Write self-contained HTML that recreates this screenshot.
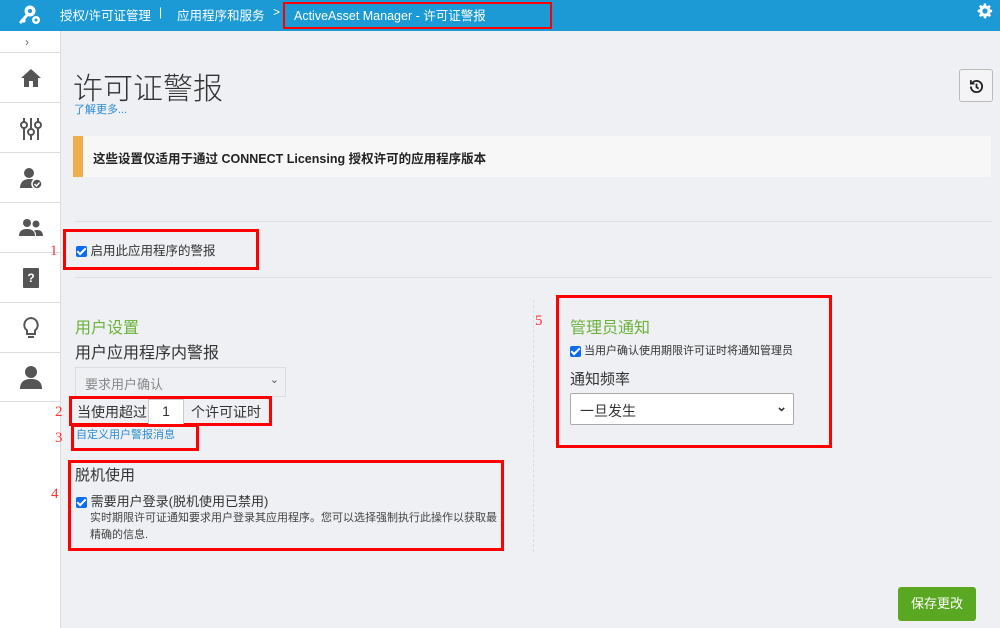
<!DOCTYPE html>
<html><head><meta charset="utf-8"><style>
*{box-sizing:border-box;margin:0;padding:0}
body{width:1000px;height:628px;overflow:hidden;background:#eff0f4;font-family:"Liberation Sans","Noto Sans CJK SC",sans-serif;color:#333;position:relative}
.a{position:absolute}
.top{left:0;top:0;width:1000px;height:31px;background:#1c9ad6;color:#fff;font-size:12px}
.side{left:0;top:31px;width:61px;height:597px;background:#fff;border-right:1px solid #ddd}
.si{position:absolute;left:0;width:61px;border-top:1px solid #ddd;height:50px;display:flex;align-items:center;justify-content:center}
.red{position:absolute;border:3px solid #f00}
.rn{position:absolute;color:#f33;font-family:"Liberation Serif",serif;font-size:15px}
.cb{display:inline-block;width:11px;height:11px;background:#0b6cf0;border-radius:2px;position:relative;vertical-align:middle}
.cb:after{content:"";position:absolute;left:3px;top:0px;width:3px;height:7px;border:solid #fff;border-width:0 2px 2px 0;transform:rotate(45deg)}
</style></head><body>
<div class="a top">
 <svg class="a" style="left:17px;top:5px" width="24" height="20" viewBox="0 0 24 20"><circle cx="13" cy="6" r="5.5" fill="#fff"/><circle cx="13" cy="6" r="2" fill="#1c9ad6"/><path d="M9 9 L2 17 L4 19 L6 17 L7 18 L9 16 L8 15 L11 11Z" fill="#fff"/><circle cx="19" cy="15" r="4" fill="#fff"/><circle cx="19" cy="15" r="1.5" fill="#1c9ad6"/></svg>
 <span class="a" style="left:60px;top:5px;font-size:12.5px">授权/许可证管理</span>
 <span class="a" style="left:159px;top:5px">|</span>
 <span class="a" style="left:177px;top:5px;font-size:12.5px">应用程序和服务</span>
 <span class="a" style="left:273px;top:5px">&gt;</span>
 <div class="red" style="left:283px;top:2px;width:269px;height:27px;border-width:2px"></div>
 <span class="a" style="left:294px;top:5px;font-size:12.5px">ActiveAsset Manager - 许可证警报</span>
 <svg class="a" style="left:976px;top:2px" width="18" height="18" viewBox="0 0 24 24"><path fill="#fff" fill-rule="evenodd" d="M12 8.5a3.5 3.5 0 100 7 3.5 3.5 0 000-7zm9.5 5v-3l-2.6-.5-.7-1.7 1.5-2.2-2.1-2.1-2.2 1.5-1.7-.7L13.5 2h-3l-.5 2.6-1.7.7L6.1 3.8 4 5.9l1.5 2.2-.7 1.7L2.2 10.5v3l2.6.5.7 1.7L4 17.9 6.1 20l2.2-1.5 1.7.7.5 2.6h3l.5-2.6 1.7-.7 2.2 1.5 2.1-2.1-1.5-2.2.7-1.7z"/></svg>
</div>
<div class="a side">
 <div class="a" style="left:25px;top:4px;color:#666;font-size:12px">›</div>
 <div class="si" style="top:21px"><svg width="22" height="20" viewBox="0 0 22 20"><path d="M11 1 L1 10 H4 V19 H9 V13 H13 V19 H18 V10 H21Z" fill="#555"/></svg></div>
 <div class="si" style="top:71px"><svg width="22" height="24" viewBox="0 0 22 24" stroke="#555" stroke-width="2" fill="none"><path d="M4 2V24M11 2V24M18 2V24"/><circle cx="4" cy="9" r="3" fill="#fff"/><circle cx="11" cy="16" r="3" fill="#fff"/><circle cx="18" cy="9" r="3" fill="#fff"/></svg></div>
 <div class="si" style="top:121px"><svg width="24" height="24" viewBox="0 0 24 24" fill="#555"><circle cx="10" cy="7" r="5"/><path d="M1 22c0-6 4-9 9-9s6 1 7 2v7z"/><circle cx="18" cy="18" r="5" fill="#555" stroke="#fff" stroke-width="1.5"/><path d="M15.5 18l2 2 3-3.5" stroke="#fff" stroke-width="1.5" fill="none"/></svg></div>
 <div class="si" style="top:171px"><svg width="24" height="20" viewBox="0 0 24 20" fill="#555"><circle cx="8" cy="5" r="4"/><circle cx="17" cy="6" r="3.5"/><path d="M0 18c0-5 3-7 8-7s8 2 8 7z"/><path d="M17 18h7c0-4-2-6-6-6-1 0-2 0-3 1 2 1 2 3 2 5z"/></svg></div>
 <div class="si" style="top:221px"><svg width="18" height="22" viewBox="0 0 18 22"><rect x="1" y="1" width="16" height="20" rx="1" fill="#555"/><text x="9" y="15" font-size="12" font-weight="bold" fill="#fff" text-anchor="middle" font-family="Liberation Sans">?</text></svg></div>
 <div class="si" style="top:271px"><svg width="18" height="24" viewBox="0 0 18 24" fill="none" stroke="#555" stroke-width="2"><path d="M9 2a7 7 0 00-4 12.5V18h8v-3.5A7 7 0 009 2z"/><path d="M6 21h6"/></svg></div>
 <div class="si" style="top:321px;border-bottom:1px solid #ddd"><svg width="22" height="24" viewBox="0 0 22 24" fill="#555"><circle cx="11" cy="7" r="6"/><path d="M0 24c0-7 4-10 11-10s11 3 11 10z"/></svg></div>
</div>
<div class="a" style="left:73px;top:64px;font-size:30px;color:#333;font-weight:300">许可证警报</div>
<div class="a" style="left:74px;top:101px;font-size:11px;color:#2a8bd6">了解更多...</div>
<div class="a" style="left:959px;top:69px;width:34px;height:33px;border:1px solid #bbb;border-radius:3px;background:#f4f4f6"><svg style="margin:8px" width="17" height="17" viewBox="0 0 24 24" fill="none" stroke="#222" stroke-width="2.5"><path d="M4 12a8 8 0 108-8 8 8 0 00-6 3"/><path d="M4 3v5h5" stroke-width="2.5"/><path d="M12 8v5l3 2"/></svg></div>
<div class="a" style="left:73px;top:136px;width:918px;height:41px;background:#f7f7f8;border-left:10px solid #f0ad4e"></div>
<div class="a" style="left:93px;top:148px;font-size:12.5px;font-weight:bold;color:#222">这些设置仅适用于通过 CONNECT Licensing 授权许可的应用程序版本</div>
<div class="a" style="left:75px;top:221px;width:917px;height:1px;background:#ddd"></div>
<div class="a" style="left:75px;top:277px;width:917px;height:1px;background:#ddd"></div>
<div class="red" style="left:63px;top:229px;width:196px;height:41px"></div>
<div class="rn" style="left:50px;top:243px">1</div>
<div class="a" style="left:76px;top:240px;font-size:12.5px"><span class="cb"></span> 启用此应用程序的警报</div>
<div class="a" style="left:533px;top:300px;width:1px;height:252px;border-left:1px dashed #ddd"></div>
<div class="a" style="left:75px;top:314px;font-size:16px;color:#6ab23a">用户设置</div>
<div class="a" style="left:75px;top:339px;font-size:16px;color:#333">用户应用程序内警报</div>
<div class="a" style="left:75px;top:367px;width:211px;height:30px;border:1px solid #ddd;background:#eff0f4;font-size:13px;color:#888;padding:6px 9px">要求用户确认<span style="position:absolute;right:6px;top:5px;font-size:11px;color:#555">⌄</span></div>
<div class="red" style="left:69px;top:396px;width:203px;height:30px"></div>
<div class="rn" style="left:55px;top:404px">2</div>
<div class="a" style="left:77px;top:402px;font-size:14px">当使用超过</div>
<div class="a" style="left:148px;top:399px;width:36px;height:26px;background:#fff;border:1px solid #ccc;font-size:14px;text-align:center;padding-top:3px">1</div>
<div class="a" style="left:191px;top:402px;font-size:14px">个许可证时</div>
<div class="red" style="left:71px;top:424px;width:128px;height:27px"></div>
<div class="rn" style="left:55px;top:430px">3</div>
<div class="a" style="left:76px;top:426px;font-size:11px;color:#2a8bd6">自定义用户警报消息</div>
<div class="red" style="left:68px;top:460px;width:436px;height:91px"></div>
<div class="rn" style="left:51px;top:486px">4</div>
<div class="a" style="left:75px;top:464px;font-size:15px">脱机使用</div>
<div class="a" style="left:76px;top:491px;font-size:13px"><span class="cb"></span> 需要用户登录(脱机使用已禁用)</div>
<div class="a" style="left:90px;top:510px;font-size:11px;line-height:17px;color:#444;width:412px">实时期限许可证通知要求用户登录其应用程序。您可以选择强制执行此操作以获取最精确的信息.</div>
<div class="red" style="left:556px;top:295px;width:276px;height:153px"></div>
<div class="rn" style="left:535px;top:313px">5</div>
<div class="a" style="left:570px;top:314px;font-size:16px;color:#6ab23a">管理员通知</div>
<div class="a" style="left:570px;top:342px;font-size:11px"><span class="cb"></span> 当用户确认使用期限许可证时将通知管理员</div>
<div class="a" style="left:570px;top:368px;font-size:15px">通知频率</div>
<div class="a" style="left:570px;top:393px;width:224px;height:32px;border:1px solid #aaa;border-radius:2px;background:#fff;font-size:14px;padding:7px 9px">一旦发生<span style="position:absolute;right:6px;top:5px;font-size:13px;font-weight:bold">⌄</span></div>
<div class="a" style="left:898px;top:587px;width:78px;height:34px;background:#5aa821;border-radius:3px;color:#fff;font-size:13px;text-align:center;line-height:34px">保存更改</div>
</body></html>
